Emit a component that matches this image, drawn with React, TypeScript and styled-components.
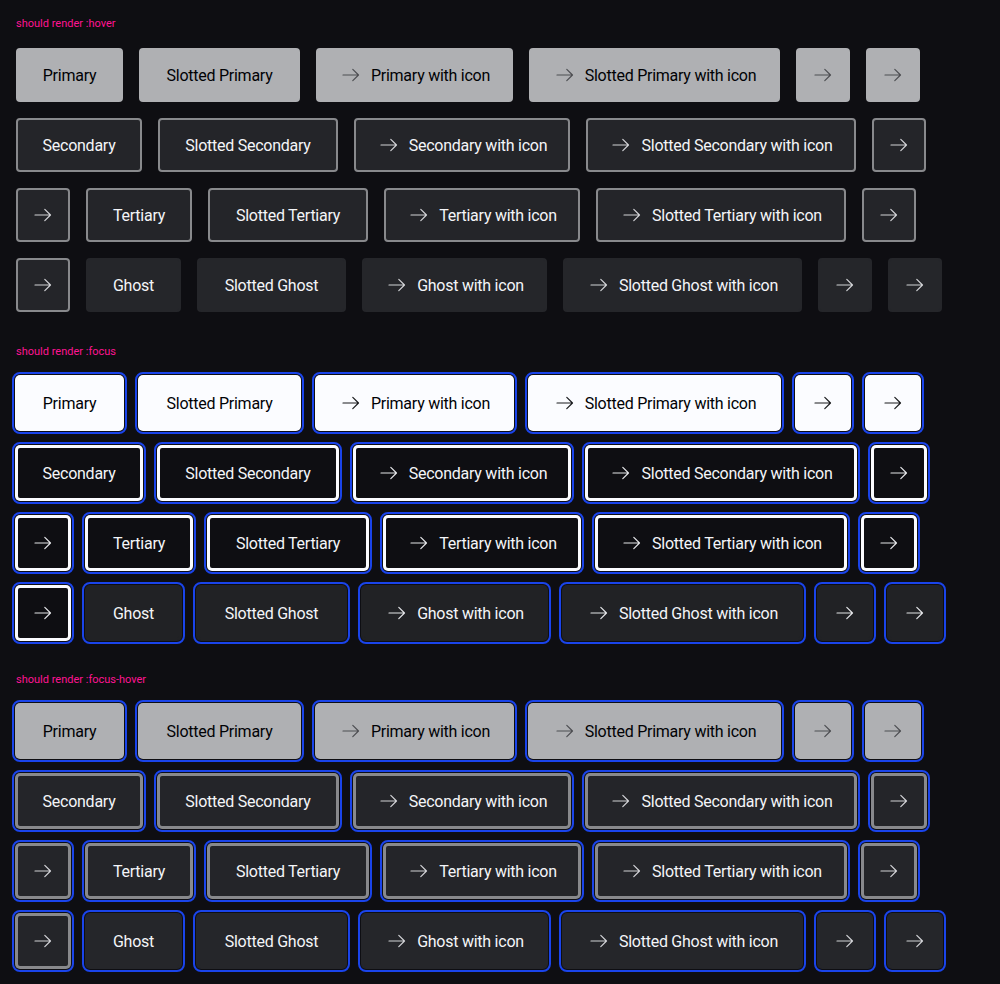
import React from 'react'
import styled, { createGlobalStyle, css } from 'styled-components'

type Variant = 'primary' | 'secondary' | 'tertiary' | 'ghost'
type State = 'hover' | 'focus' | 'focus-hover'

type Item = {
  label?: string
  width: number
}

const variants: { name: Variant; items: Item[] }[] = [
  {
    name: 'primary',
    items: [
      { label: 'Primary', width: 107 },
      { label: 'Slotted Primary', width: 161 },
      { label: 'Primary with icon', width: 197 },
      { label: 'Slotted Primary with icon', width: 251 },
      { width: 54 },
      { width: 54 },
    ],
  },
  {
    name: 'secondary',
    items: [
      { label: 'Secondary', width: 126 },
      { label: 'Slotted Secondary', width: 180 },
      { label: 'Secondary with icon', width: 216 },
      { label: 'Slotted Secondary with icon', width: 270 },
      { width: 54 },
      { width: 54 },
    ],
  },
  {
    name: 'tertiary',
    items: [
      { label: 'Tertiary', width: 106 },
      { label: 'Slotted Tertiary', width: 160 },
      { label: 'Tertiary with icon', width: 196 },
      { label: 'Slotted Tertiary with icon', width: 250 },
      { width: 54 },
      { width: 54 },
    ],
  },
  {
    name: 'ghost',
    items: [
      { label: 'Ghost', width: 95 },
      { label: 'Slotted Ghost', width: 149 },
      { label: 'Ghost with icon', width: 185 },
      { label: 'Slotted Ghost with icon', width: 239 },
      { width: 54 },
      { width: 54 },
    ],
  },
]

const states: State[] = ['hover', 'focus', 'focus-hover']

const palette = {
  hover: {
    primary: { bg: '#afb0b3', border: '#afb0b3', color: '#010205', icon: '#4d4e52' },
    secondary: { bg: '#242529', border: '#88898c', color: '#f4f5f8', icon: '#d2d3d6' },
    tertiary: { bg: '#242529', border: '#88898c', color: '#f4f5f8', icon: '#d2d3d6' },
    ghost: { bg: '#25262a', border: '#25262a', color: '#f4f5f8', icon: '#d2d3d6' },
  },
  rest: {
    primary: { bg: '#fbfcff', border: '#fbfcff', color: '#010205', icon: '#1a1b1e' },
    secondary: { bg: '#0e0e12', border: '#fbfcff', color: '#f4f5f8', icon: '#e4e5e8' },
    tertiary: { bg: '#0e0e12', border: '#fbfcff', color: '#f4f5f8', icon: '#e4e5e8' },
    ghost: { bg: '#212225', border: '#212225', color: '#f4f5f8', icon: '#e4e5e8' },
  },
}

const GlobalStyle = createGlobalStyle`
  html, body {
    margin: 0;
    background: #0e0e12;
  }
`

const Page = styled.div`
  padding: 0 16px;
  font-family: Roboto, 'Liberation Sans', sans-serif;
`

const Section = styled.section`
  padding: 16px 0;
`

const Label = styled.p`
  margin: 1px 0 17px;
  font-size: 11px;
  line-height: 14px;
  color: deeppink;
`

const Flow = styled.div`
  display: flex;
  flex-wrap: wrap;
  gap: 16px;
`

const Button = styled.button<{ $variant: Variant; $state: State; $width: number }>`
  box-sizing: border-box;
  width: ${(p) => p.$width}px;
  height: 54px;
  padding: 1px 0 0;
  display: inline-flex;
  align-items: center;
  justify-content: center;
  gap: 8px;
  border: 2px solid;
  border-radius: 4px;
  font-family: Roboto, 'Liberation Sans', sans-serif;
  font-size: 16px;
  line-height: 24px;
  letter-spacing: -0.25px;
  ${(p) => {
    const c = palette[p.$state === 'focus' ? 'rest' : 'hover'][p.$variant]
    return css`
      background: ${c.bg};
      border-color: ${c.border};
      color: ${c.color};
      svg {
        color: ${c.icon};
        margin-top: -1px;
      }
    `
  }}
  ${(p) =>
    p.$state !== 'hover' &&
    css`
      outline: 2px solid #1a44ea;
      outline-offset: 2px;
      box-shadow: 0 0 0 1px
        ${palette[p.$state === 'focus' ? 'rest' : 'hover'][p.$variant].border};
    `}
`

const ArrowRight = () => (
  <svg width="24" height="24" viewBox="0 0 24 24" fill="none" aria-hidden="true">
    <path
      d="M4 12h15.5M13.8 6.3l5.7 5.7-5.7 5.7"
      stroke="currentColor"
      strokeWidth="1.2"
      strokeLinecap="round"
      strokeLinejoin="round"
    />
  </svg>
)

const App = () => {
  return (
    <Page>
      <GlobalStyle />
      {states.map((state) => (
        <Section key={state}>
          <Label>should render :{state}</Label>
          <Flow>
            {variants.map((v) =>
              v.items.map((item, i) => (
                <Button key={v.name + i} $variant={v.name} $state={state} $width={item.width}>
                  {(i >= 2 || !item.label) && <ArrowRight />}
                  {item.label && <span>{item.label}</span>}
                </Button>
              ))
            )}
          </Flow>
        </Section>
      ))}
    </Page>
  )
}

export default App
